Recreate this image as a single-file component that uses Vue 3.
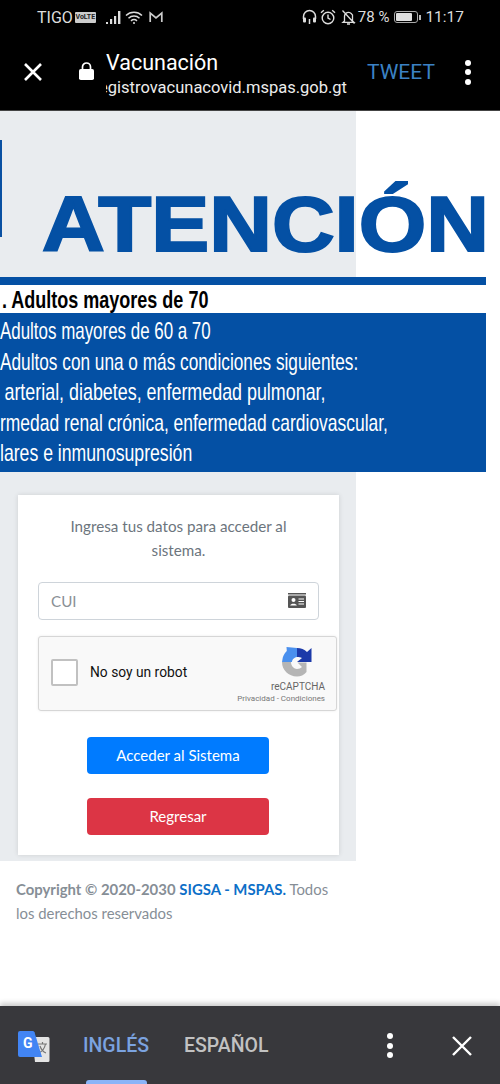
<script setup>
// fit = horizontal squeeze, the banner type is a condensed face we don't have
const priorities = [
  { text: 'Adultos mayores de 60 a 70', indent: 0, fit: 0.705 },
  { text: 'Adultos con una o más condiciones siguientes:', indent: 0, fit: 0.718 },
  { text: 'arterial, diabetes, enfermedad pulmonar,', indent: 6, fit: 0.745 },
  { text: 'rmedad renal crónica, enfermedad cardiovascular,', indent: 0, fit: 0.727 },
  { text: 'lares e inmunosupresión', indent: 0, fit: 0.735 }
];
</script>

<template>
  <div class="screen">
    <header class="chrome">
      <div class="status">
        <div class="status-left">
          <span class="carrier">TIGO</span>
          <span class="volte">VoLTE</span>
          <svg class="sig" width="17" height="15" viewBox="0 0 17 15">
            <rect x="0" y="12" width="2" height="2" fill="#ddd" />
            <rect x="4" y="9" width="2.2" height="5" fill="#ddd" />
            <rect x="8" y="6" width="2.2" height="8" fill="#ddd" />
            <rect x="12" y="1" width="2.4" height="13" fill="#ddd" />
          </svg>
          <svg class="wifi" width="18" height="15" viewBox="0 0 18 15" fill="none" stroke="#ddd" stroke-width="1.5">
            <path d="M1 5.5c4.500-4.200 11.500-4.200 16 0" />
            <path d="M3.500 8.200c3-2.800 8-2.800 11 0" />
            <path d="M6 10.800c1.700-1.400 4.300-1.400 6 0" />
            <circle cx="9" cy="13" r="1" fill="#ddd" stroke="none" />
          </svg>
          <svg class="gmail" width="14" height="12" viewBox="0 0 14 12" fill="none" stroke="#ccc" stroke-width="1.700">
            <path d="M1.200 11V2l5.800 5 5.800-5v9" />
          </svg>
        </div>
        <div class="status-right">
          <svg width="15" height="16" viewBox="0 0 15 16" fill="none" stroke="#ddd" stroke-width="1.500">
            <path d="M1.500 10V7.500a6 6 0 0 1 12 0V10" />
            <rect x="1" y="8.500" width="3" height="5" rx="1" fill="#ddd" stroke="none" />
            <rect x="11" y="8.500" width="3" height="5" rx="1" fill="#ddd" stroke="none" />
            <path d="M7.500 10v5" />
          </svg>
          <svg class="alarm" width="16" height="16" viewBox="0 0 16 16" fill="none" stroke="#ddd" stroke-width="1.400">
            <circle cx="8" cy="9" r="5.800" />
            <path d="M8 5.500V9l2.500 1.500M1 3.800 3.800 1.200M15 3.800l-2.800-2.600" />
          </svg>
          <svg class="bell" width="15" height="16" viewBox="0 0 15 16" fill="none" stroke="#ddd" stroke-width="1.300">
            <path d="M3.500 12V7.500a4 4 0 0 1 7-2.700l1 1.200V12l1.500 1.300H2zM6 15h3M1.500 1.500l12 13" />
          </svg>
          <span class="pct">78 %</span>
          <span class="battery"><i></i></span>
          <span class="clock">11:17</span>
        </div>
      </div>

      <div class="appbar">
        <svg class="close" width="20" height="20" viewBox="0 0 20 20" stroke="#fff" stroke-width="2.600">
          <path d="M2 2l16 16M18 2 2 18" />
        </svg>
        <svg class="lock" width="15" height="18" viewBox="0 0 15 18">
          <path d="M3.500 7.500V5a4 4 0 0 1 8 0v2.500" fill="none" stroke="#fff" stroke-width="1.700" />
          <rect x="0" y="7" width="15" height="11" rx="1.800" fill="#fff" />
        </svg>
        <div class="page-title">
          <div class="title">Vacunación</div>
          <div class="url"><span>registrovacunacovid.mspas.gob.gt</span></div>
        </div>
        <span class="tweet">TWEET</span>
        <span class="dots"><i></i><i></i><i></i></span>
      </div>
    </header>

    <main class="page">
      <div class="column">
        <section class="banner">
          <div class="banner-head">
            <span class="edge"></span>
            <h1>ATENCIÓN</h1>
          </div>
          <div class="stripe"></div>
          <div class="first"><span>. Adultos mayores de 70</span></div>
          <ul class="list">
            <li
              v-for="line in priorities"
              :key="line.text"
              :style="{ paddingLeft: line.indent + 'px', transform: 'scaleX(' + line.fit + ')' }"
            >{{ line.text }}</li>
          </ul>
        </section>

        <section class="card">
          <p class="intro">Ingresa tus datos para acceder al sistema.</p>
          <div class="field">
            <span>CUI</span>
            <svg width="18" height="15" viewBox="0 0 18 15">
              <rect x="0" y="0" width="18" height="1.500" fill="#555" />
              <rect x="0" y="2.500" width="18" height="12.500" rx="1" fill="#555" />
              <circle cx="5.500" cy="7" r="2" fill="#fff" />
              <path d="M2.200 12.500c.3-2.400 6.300-2.400 6.600 0z" fill="#fff" />
              <path d="M10.500 6h5.500M10.500 8.500h5.500M10.500 11h5.500" stroke="#fff" />
            </svg>
          </div>

          <div class="captcha">
            <span class="box"></span>
            <span class="robot">No soy un robot</span>
            <div class="brand">
              <svg width="30" height="30" viewBox="0 0 30 30">
                <path d="M0 15 .8 10.500 C1.800 7.500 3.200 5.500 4.800 4 L4.500 0 L15 1 L16 10 C13 10 10 12 10 15z" fill="#4a90ee" />
                <path d="M15 1 C19 1 22.500 2.500 25 5 L29.500 1 V15 H15 L20 11 C18.500 10 17 10 15 10z" fill="#1c3aa9" />
                <path d="M0 15 H9 C9 19 12 22 15 22 C17 22 18.800 21.300 20 20 L15.500 15.500 H24.500 V25 C22 28 18.500 29.500 15 29.500 C6.500 29.500 0 23 0 15z" fill="#b5b5b5" />
              </svg>
              <span class="rc-name">reCAPTCHA</span>
              <span class="rc-links">Privacidad - Condiciones</span>
            </div>
          </div>

          <button class="btn primary">Acceder al Sistema</button>
          <button class="btn danger">Regresar</button>
        </section>
      </div>

      <footer class="copy">
        <b>Copyright © 2020-2030</b> <b class="org">SIGSA - MSPAS.</b> Todos los derechos reservados
      </footer>
    </main>

    <div class="translate">
      <svg class="gt" width="32" height="31" viewBox="0 0 32 31">
        <path d="M14 6h16a1.500 1.500 0 0 1 1.500 1.500v22a1.500 1.500 0 0 1-1.500 1.500H17z" fill="#e4e4e4" />
        <path d="M20 13h9M24.500 11v2M27.500 13c-1 5-4 8-7 9M22 15c1 3 3 6 6 7" fill="none" stroke="#777" stroke-width="1.200" />
        <path d="M2 0h13a2 2 0 0 1 1.500 1.300L24 26H2a2 2 0 0 1-2-2V2a2 2 0 0 1 2-2z" fill="#4285f4" />
        <text x="5" y="17" class="gt-g">G</text>
      </svg>
      <span class="tab active">INGLÉS</span>
      <span class="tab">ESPAÑOL</span>
      <span class="dots tr-dots"><i></i><i></i><i></i></span>
      <svg class="tr-close" width="20" height="20" viewBox="0 0 20 20" stroke="#fff" stroke-width="2.400">
        <path d="M1 1l18 18M19 1 1 19" />
      </svg>
      <span class="indicator"></span>
    </div>
  </div>
</template>

<style scoped>
.screen {
  width: 500px;
  height: 1084px;
  display: flex;
  flex-direction: column;
  overflow: hidden;
  background: #fff;
  font-family: Lato, "Open Sans", sans-serif;
}

.chrome {
  background: #000;
  height: 110px;
  flex: none;
  color: #fff;
  font-family: Roboto, sans-serif;
}

.status {
  height: 34px;
  display: flex;
  align-items: center;
  justify-content: space-between;
  padding: 0 36px 0 37px;
  color: #ddd;
}

.status-left,
.status-right {
  display: flex;
  align-items: center;
}

.carrier {
  font-size: 16px;
}

.volte {
  margin-left: 2px;
  background: #ccc;
  color: #222;
  font-size: 7px;
  font-weight: 700;
  line-height: 11px;
  width: 21px;
  text-align: center;
  border-radius: 1px;
}

.sig {
  margin-left: 10px;
}

.wifi {
  margin-left: 2px;
}

.gmail {
  margin-left: 6px;
}

.alarm {
  margin-left: 3px;
}

.bell {
  margin-left: 5px;
}

.pct {
  font-size: 15px;
  margin-left: 2px;
}

.battery {
  margin-left: 5px;
  width: 24px;
  height: 12px;
  border: 1px solid #aaa;
  border-radius: 3px;
  position: relative;
  padding: 1px;
  box-sizing: border-box;
}

.battery i {
  display: block;
  width: 78%;
  height: 100%;
  background: #ddd;
  border-radius: 1px;
}

.battery::after {
  content: "";
  position: absolute;
  right: -4px;
  top: 3px;
  width: 2px;
  height: 5px;
  background: #bbb;
}

.clock {
  margin-left: 7px;
  font-size: 15.5px;
}

.appbar {
  height: 76px;
  display: flex;
  align-items: center;
  padding-left: 23px;
}

.close {
  flex: none;
}

.lock {
  flex: none;
  margin-left: 36px;
  margin-top: -2px;
}

.page-title {
  width: 241px;
  margin-left: 12px;
  margin-top: 4px;
}

.title {
  font-size: 21.5px;
  line-height: 28px;
}

.url {
  display: flex;
  justify-content: flex-end;
  overflow: hidden;
  white-space: nowrap;
  font-size: 16.5px;
  line-height: 22px;
  color: #ececec;
}

.url span {
  flex: none;
}

.tweet {
  margin-left: 20px;
  color: #3b82c4;
  font-size: 21px;
}

.dots {
  display: flex;
  flex-direction: column;
  gap: 3.500px;
  margin-left: 30px;
}

.dots i {
  display: block;
  width: 6px;
  height: 6px;
  border-radius: 50%;
  background: #fff;
}

.page {
  flex: 1;
  min-height: 0;
  border-top: 1px solid #444;
}

.column {
  width: 356px;
  background: #e9ecef;
  padding-bottom: 6px;
}

.banner {
  width: 486px;
}

.banner-head {
  height: 166px;
  position: relative;
  overflow: visible;
}

.edge {
  position: absolute;
  left: 0;
  top: 29px;
  width: 2px;
  height: 97px;
  background: #0a50a2;
}

h1 {
  position: absolute;
  left: 42px;
  top: 68px;
  margin: 0;
  font-family: "Liberation Sans", sans-serif;
  font-weight: 700;
  font-size: 78px;
  line-height: 90px;
  color: #0450a4;
  white-space: nowrap;
  transform: scaleX(1.113);
  transform-origin: left;
  -webkit-text-stroke: 2px #0450a4;
}

.stripe {
  height: 8px;
  background: #0450a4;
}

.first {
  height: 28px;
  background: #fff;
  color: #000;
  font-family: "Liberation Sans", sans-serif;
  font-weight: 700;
  font-size: 24px;
  line-height: 30px;
  white-space: nowrap;
  padding-left: 2px;
}

.first span {
  display: block;
  transform: scaleX(0.75);
  transform-origin: left;
}

.list {
  margin: 0;
  padding: 3px 0;
  list-style: none;
  background: #0450a4;
  color: #fff;
  font-family: "Liberation Sans", sans-serif;
  font-size: 24px;
  line-height: 30.500px;
  white-space: nowrap;
}

.list li {
  transform-origin: left;
}

.card {
  box-sizing: border-box;
  width: 321px;
  height: 360px;
  margin: 23px 0 0 18px;
  padding: 19px 20px 0;
  background: #fff;
  box-shadow: 0 0 5px rgba(0, 0, 0, 0.12);
  display: flex;
  flex-direction: column;
}

.intro {
  margin: 0;
  color: #6c757d;
  font-size: 15.200px;
  line-height: 24.500px;
  text-align: center;
  padding: 0 10px;
}

.field {
  box-sizing: border-box;
  height: 38px;
  margin-top: 19px;
  padding: 0 12px;
  border: 1px solid #ced4da;
  border-radius: 4px;
  display: flex;
  align-items: center;
  justify-content: space-between;
  color: #8a9096;
  font-size: 15.200px;
}

.captcha {
  box-sizing: border-box;
  width: 299px;
  height: 75px;
  flex: none;
  margin-top: 16px;
  border: 1px solid #d6d6d6;
  border-radius: 3px;
  background: #f9f9f9;
  box-shadow: 0 0 3px rgba(0, 0, 0, 0.08);
  display: flex;
  align-items: center;
  padding-left: 12px;
  font-family: Roboto, sans-serif;
}

.box {
  box-sizing: border-box;
  width: 27px;
  height: 27px;
  border: 2px solid #c1c1c1;
  border-radius: 2px;
  background: #fff;
  margin-top: -2px;
}

.robot {
  margin-left: 12px;
  margin-top: -2px;
  font-size: 13.800px;
  color: #111;
}

.brand {
  margin-left: auto;
  align-self: flex-start;
  width: 100px;
  padding: 10px 11px 0 0;
  display: flex;
  flex-direction: column;
  align-items: flex-end;
  color: #666;
}

.brand svg {
  margin-right: 13px;
}

.rc-name {
  font-size: 10px;
  line-height: 13px;
  margin-top: 3px;
}

.rc-links {
  font-size: 8px;
  line-height: 11px;
  white-space: nowrap;
  color: #777;
}

.btn {
  width: 182px;
  height: 37px;
  flex: none;
  align-self: flex-start;
  margin-left: 49px;
  border: none;
  border-radius: 4px;
  color: #fff;
  font-family: Lato, "Open Sans", sans-serif;
  font-size: 15px;
}

.primary {
  margin-top: 26px;
  background: #007bff;
}

.danger {
  margin-top: 24px;
  background: #dc3545;
}

.copy {
  padding: 16px 150px 0 16px;
  color: #868e96;
  font-size: 14.900px;
  line-height: 24px;
}

.copy b {
  font-weight: 700;
}

.org {
  color: #0d6fc8;
}

.translate {
  flex: none;
  height: 78px;
  position: relative;
  background: #38383c;
  box-shadow: 0 -3px 5px rgba(0, 0, 0, 0.2);
  display: flex;
  align-items: center;
  padding: 0 0 0 18px;
  font-family: Roboto, sans-serif;
  font-weight: 500;
  font-size: 19.500px;
  color: #c2c2c2;
}

.gt {
  flex: none;
  margin-top: 2px;
}

.gt-g {
  font-family: Roboto, sans-serif;
  font-weight: 700;
  font-size: 14px;
  fill: #fff;
}

.tab {
  margin-left: 33px;
  margin-top: 1px;
}

.tab + .tab {
  margin-left: 35px;
}

.tab.active {
  color: #7ba3e0;
}

.tr-dots {
  margin-left: 118px;
  margin-top: 1px;
}

.tr-close {
  margin-left: 59px;
  margin-top: 1px;
}

.indicator {
  position: absolute;
  left: 86px;
  bottom: 0;
  width: 61px;
  height: 4px;
  background: #8ab4f8;
  border-radius: 3px 3px 0 0;
}
</style>
